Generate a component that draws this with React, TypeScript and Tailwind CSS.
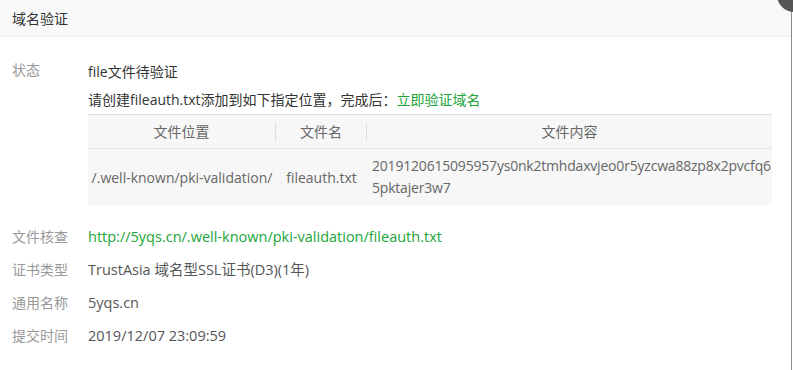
import React from "react";

const font = { fontFamily: '"Open Sans", "Noto Sans CJK SC", sans-serif' };

const Row = ({ label, children }: { label: string; children: React.ReactNode }) => (
  <div className="flex h-[33px] items-center">
    <div className="w-[88px] shrink-0 pl-3 text-[#999]">{label}</div>
    <div className="text-[14.5px] text-[#555]">{children}</div>
  </div>
);

const App = () => {
  return (
    <div className="relative h-[370px] w-[793px] overflow-hidden bg-white text-[14px]" style={font}>
      <div className="h-full w-[792px] border-r border-[#8c8c8c]">
        <div className="flex h-[37px] items-center border-b border-[#eee] bg-[#f8f8f8] pl-3 text-[#333]">
          域名验证
        </div>

        {/* status block */}
        <div className="mt-[21px] flex">
          <div className="w-[88px] shrink-0 pl-3 leading-[24px] text-[#999]">状态</div>
          <div className="flex-1">
            <div className="leading-[28px] text-[#333]">file文件待验证</div>
            <div className="leading-[28px] text-[#333]">
              请创建fileauth.txt添加到如下指定位置，完成后：
              <a className="cursor-pointer text-[#20a53a]">立即验证域名</a>
            </div>
            <div className="w-[684px] border-t border-[#ddd] bg-[#f7f7f7] text-[#666]">
              <div className="flex h-[34px] items-center border-b border-[#e8e8e8]">
                <div className="w-[187px] text-center">文件位置</div>
                <div className="h-[18px] w-px bg-[#ddd]" />
                <div className="w-[90px] text-center">文件名</div>
                <div className="h-[18px] w-px bg-[#ddd]" />
                <div className="flex-1 text-center">文件内容</div>
              </div>
              <div className="flex h-[56px] items-center">
                <div className="w-[188px] text-center">/.well-known/pki-validation/</div>
                <div className="w-[91px] text-center">fileauth.txt</div>
                <div className="flex-1 break-all pl-[5px] leading-[22px] tracking-[-0.2px]">
                  2019120615095957ys0nk2tmhdaxvjeo0r5yzcwa88zp8x2pvcfq65pktajer3w7
                </div>
              </div>
            </div>
          </div>
        </div>

        <div className="mt-[15px]">
          <Row label="文件核查">
            <span className="text-[#20a53a]">http://5yqs.cn/.well-known/pki-validation/fileauth.txt</span>
          </Row>
          <Row label="证书类型">TrustAsia 域名型SSL证书(D3)(1年)</Row>
          <Row label="通用名称">5yqs.cn</Row>
          <Row label="提交时间">2019/12/07 23:09:59</Row>
        </div>
      </div>

      <div className="absolute right-[-18px] top-[-22px] h-[34px] w-[34px] rounded-full bg-[#555]" />
    </div>
  );
};

export default App;
